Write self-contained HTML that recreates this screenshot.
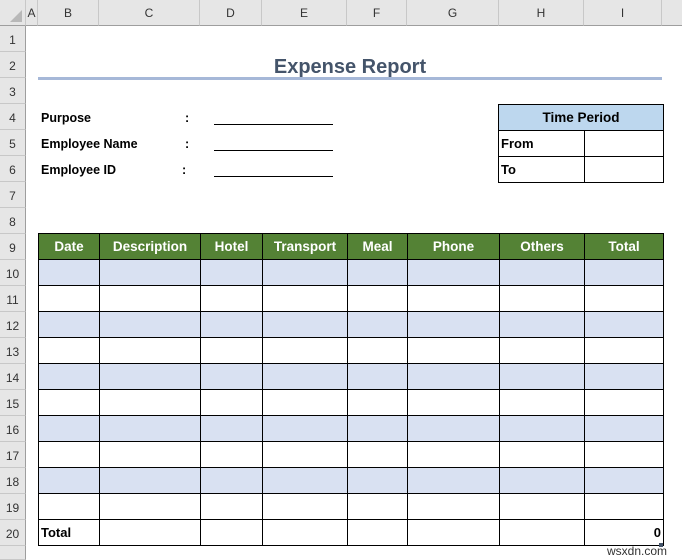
<!DOCTYPE html>
<html><head><meta charset="utf-8"><style>
*{margin:0;padding:0;box-sizing:border-box}
body{width:682px;height:560px;background:#fff;position:relative;overflow:hidden;font-family:"Liberation Sans",sans-serif}
.ch{position:absolute;top:0;height:26px;background:#e6e6e6;border-right:1px solid #c8c8c8;border-bottom:1px solid #9e9e9e;font-size:12px;color:#333;text-align:center;line-height:26px}
.rh{position:absolute;left:0;width:26px;height:26px;background:#e6e6e6;border-bottom:1px solid #c8c8c8;border-right:1px solid #9e9e9e;font-size:12px;color:#333;text-align:center;line-height:28px}
.t{position:absolute;font-weight:bold;font-size:12.5px;color:#000}
.ul{position:absolute;left:214px;width:119px;height:1px;background:#000}
table{position:absolute;border-collapse:collapse;table-layout:fixed}
td{border:1px solid #000;height:26px;padding:0;font-weight:bold;font-size:13px}
.g td{background:#548235;color:#fff;text-align:center;font-size:13.5px}
.b td{background:#d9e1f2}
</style></head><body>
<div class="ch" style="left:0;width:26px;border-right:1px solid #c8c8c8"><div style="position:absolute;right:3px;bottom:3px;width:0;height:0;border-left:12px solid transparent;border-bottom:12px solid #b8b8b8"></div></div>
<div class="ch" style="left:26px;width:12px">A</div>
<div class="ch" style="left:38px;width:61px">B</div>
<div class="ch" style="left:99px;width:101px">C</div>
<div class="ch" style="left:200px;width:62px">D</div>
<div class="ch" style="left:262px;width:85px">E</div>
<div class="ch" style="left:347px;width:60px">F</div>
<div class="ch" style="left:407px;width:92px">G</div>
<div class="ch" style="left:499px;width:85px">H</div>
<div class="ch" style="left:584px;width:78px">I</div>
<div class="ch" style="left:662px;width:20px;border-right:none"></div>
<div class="rh" style="top:26px">1</div><div class="rh" style="top:52px">2</div><div class="rh" style="top:78px">3</div><div class="rh" style="top:104px">4</div><div class="rh" style="top:130px">5</div><div class="rh" style="top:156px">6</div><div class="rh" style="top:182px">7</div><div class="rh" style="top:208px">8</div><div class="rh" style="top:234px">9</div><div class="rh" style="top:260px">10</div><div class="rh" style="top:286px">11</div><div class="rh" style="top:312px">12</div><div class="rh" style="top:338px">13</div><div class="rh" style="top:364px">14</div><div class="rh" style="top:390px">15</div><div class="rh" style="top:416px">16</div><div class="rh" style="top:442px">17</div><div class="rh" style="top:468px">18</div><div class="rh" style="top:494px">19</div><div class="rh" style="top:520px">20</div>
<div class="rh" style="top:546px;height:14px"></div>

<div style="position:absolute;left:38px;top:56px;width:624px;text-align:center;font-weight:bold;font-size:20px;color:#44546a">Expense Report</div>
<div style="position:absolute;left:38px;top:77px;width:624px;height:3px;background:#a6b8d8"></div>

<div class="t" style="left:41px;top:111px">Purpose</div><div class="t" style="left:185px;top:111px">:</div><div class="ul" style="top:124px"></div>
<div class="t" style="left:41px;top:137px">Employee Name</div><div class="t" style="left:185px;top:137px">:</div><div class="ul" style="top:150px"></div>
<div class="t" style="left:41px;top:163px">Employee ID</div><div class="t" style="left:182px;top:163px">:</div><div class="ul" style="top:176px"></div>

<table style="left:498px;top:104px;width:165px">
<col style="width:86px"><col style="width:79px">
<tr><td colspan="2" style="background:#bdd7ee;text-align:center;font-size:13.5px">Time Period</td></tr>
<tr><td style="padding-left:2px">From</td><td></td></tr>
<tr><td style="padding-left:2px">To</td><td></td></tr>
</table>

<table style="left:38px;top:233px;width:625px">
<col style="width:61px"><col style="width:101px"><col style="width:62px"><col style="width:85px"><col style="width:60px"><col style="width:92px"><col style="width:85px"><col style="width:79px">
<tr class="g"><td>Date</td><td>Description</td><td>Hotel</td><td>Transport</td><td>Meal</td><td>Phone</td><td>Others</td><td>Total</td></tr>
<tr class="b"><td></td><td></td><td></td><td></td><td></td><td></td><td></td><td></td></tr>
<tr><td></td><td></td><td></td><td></td><td></td><td></td><td></td><td></td></tr>
<tr class="b"><td></td><td></td><td></td><td></td><td></td><td></td><td></td><td></td></tr>
<tr><td></td><td></td><td></td><td></td><td></td><td></td><td></td><td></td></tr>
<tr class="b"><td></td><td></td><td></td><td></td><td></td><td></td><td></td><td></td></tr>
<tr><td></td><td></td><td></td><td></td><td></td><td></td><td></td><td></td></tr>
<tr class="b"><td></td><td></td><td></td><td></td><td></td><td></td><td></td><td></td></tr>
<tr><td></td><td></td><td></td><td></td><td></td><td></td><td></td><td></td></tr>
<tr class="b"><td></td><td></td><td></td><td></td><td></td><td></td><td></td><td></td></tr>
<tr><td></td><td></td><td></td><td></td><td></td><td></td><td></td><td></td></tr>
<tr><td style="padding-left:2px">Total</td><td></td><td></td><td></td><td></td><td></td><td></td><td style="text-align:right;padding-right:2px">0</td></tr>
</table>
<div style="position:absolute;left:659px;top:543px;width:4px;height:4px;background:#44546a"></div>
<div style="position:absolute;left:607px;top:544px;font-size:12px;color:#333">wsxdn.com</div>
</body></html>
